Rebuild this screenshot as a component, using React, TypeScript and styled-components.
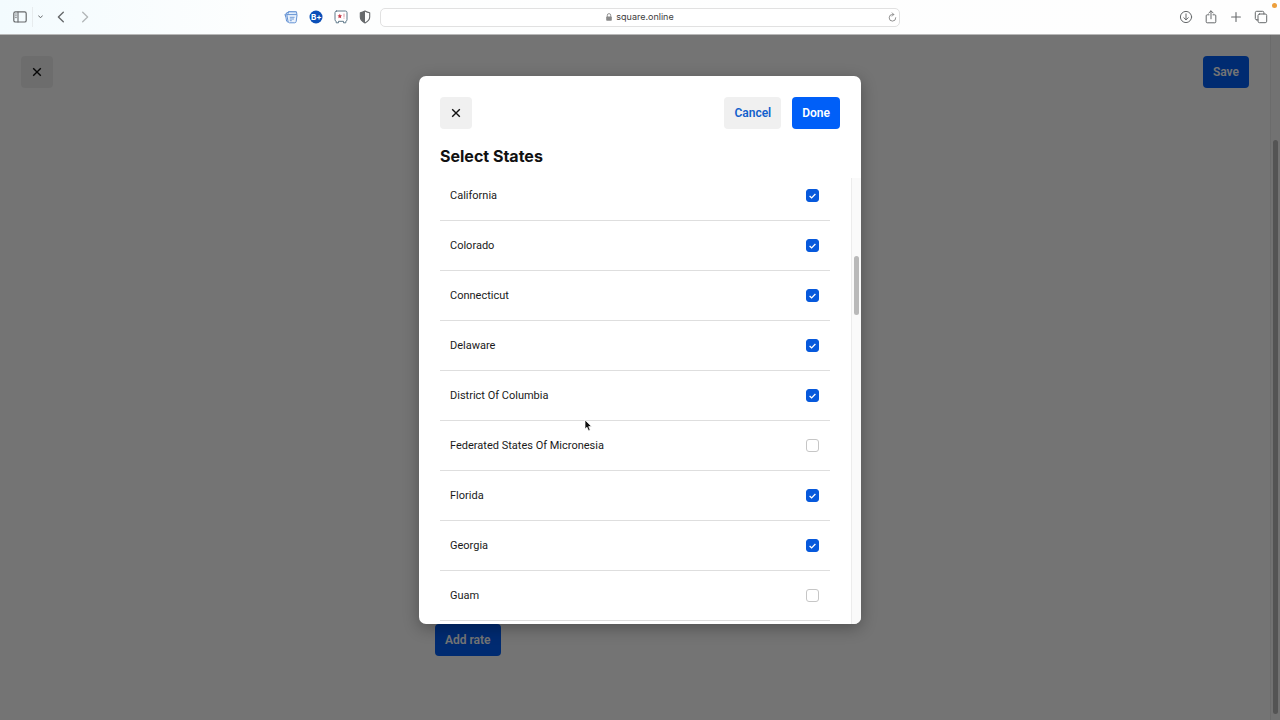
import React, { useState } from "react";
import styled, { createGlobalStyle } from "styled-components";

const GlobalStyle = createGlobalStyle`
  * { box-sizing: border-box; }
  body { margin: 0; font-family: Roboto, "Liberation Sans", sans-serif; color: #1a1a1a; }
  button, input { font: inherit; margin: 0; }
`;

const Shell = styled.div`
  display: flex;
  flex-direction: column;
  height: 100vh;
  overflow: hidden;
`;

const Toolbar = styled.header`
  position: relative;
  display: grid;
  grid-template-columns: 1fr minmax(200px, 520px) 1fr;
  align-items: center;
  flex: none;
  height: 35px;
  background: linear-gradient(90deg, #f3fbfe, #fdfefe 20%, #fefefe);
  border-bottom: 1px solid #b8b8b8;
`;

const ToolGroup = styled.div<{ $end?: boolean }>`
  display: flex;
  align-items: center;
  justify-content: ${(p) => (p.$end ? "flex-end" : "flex-start")};
  gap: ${(p) => (p.$end ? "11px" : "9px")};
  padding: ${(p) => (p.$end ? "0 12px 0 0" : "0 9px 0 13px")};
`;

const Extensions = styled.div`
  display: flex;
  gap: 11px;
  margin-left: auto;
`;

const ToolButton = styled.button<{ $width?: number }>`
  display: grid;
  place-items: center;
  width: ${(p) => p.$width ?? 14}px;
  height: 16px;
  padding: 0;
  border: 0;
  background: none;
  color: #66696b;
`;

const Separator = styled.span`
  width: 1px;
  height: 20px;
  margin: 0 -4px;
  background: #e7ecee;
`;

const AddressBar = styled.div`
  display: grid;
  grid-template-columns: 14px 1fr 14px;
  align-items: center;
  height: 19px;
  border: 1px solid #e1e1e1;
  border-radius: 5px;
  background: #fff;
`;

const Address = styled.span`
  display: flex;
  align-items: center;
  justify-content: center;
  gap: 4px;
  color: #3c3c3c;
  font: 9px/12px Inter, sans-serif;
`;

const RecordingDot = styled.span`
  position: absolute;
  top: 3px;
  right: 3px;
  width: 5px;
  height: 5px;
  border-radius: 50%;
  background: #ed9f3c;
`;

const Page = styled.main`
  position: relative;
  display: flex;
  flex: 1;
  min-height: 0;
  background: #fff;
`;

const PageContent = styled.div`
  display: flex;
  flex: 1;
  flex-direction: column;
  justify-content: space-between;
  padding: 21px 21px 64px;
`;

const ButtonBar = styled.div`
  display: flex;
  align-items: center;
  gap: 11px;
`;

const RateForm = styled.div`
  width: 400px;
  max-width: 100%;
  margin: 0 auto;
`;

const Button = styled.button<{ $kind?: "primary" | "plain"; $push?: boolean }>`
  height: 32px;
  padding: 0 10px;
  border: 0;
  border-radius: 4px;
  margin-left: ${(p) => (p.$push ? "auto" : "0")};
  background: ${(p) => (p.$kind === "plain" ? "#f0f0f0" : "#005ff8")};
  color: ${(p) => (p.$kind === "plain" ? "#1260cc" : "#fff")};
  font: 600 12px/16px Roboto, sans-serif;
  white-space: nowrap;
`;

const CloseButton = styled.button`
  display: grid;
  place-items: center;
  width: 32px;
  height: 32px;
  padding: 0;
  border: 0;
  border-radius: 4px;
  background: #f0f0f0;
  color: #111;
`;

const ScrollTrack = styled.div`
  display: flex;
  flex: none;
  flex-direction: column;
  align-items: center;
  width: 10px;
  border-left: 1px solid #ececec;
  background: #fafafa;
`;

const ScrollThumb = styled.span<{ $start: string; $size: string }>`
  width: 5px;
  height: ${(p) => p.$size};
  margin-top: ${(p) => p.$start};
  border-radius: 3px;
  background: #b9b9b9;
`;

const PageScroll = styled(ScrollTrack)`
  padding-top: 105px;
`;

const Backdrop = styled.div`
  position: absolute;
  inset: 0;
  display: flex;
  flex-direction: column;
  align-items: center;
  background: rgba(0, 0, 0, 0.545);
`;

const TopSpace = styled.div`
  flex: 0 0 6%;
`;

const Dialog = styled.section`
  display: flex;
  flex-direction: column;
  width: 442px;
  max-width: 100%;
  height: 80%;
  overflow: hidden;
  border-radius: 7px;
  background: #fff;
  box-shadow: 0 4px 16px rgba(0, 0, 0, 0.3);
`;

const DialogHeader = styled.div`
  padding: 21px 21px 11px;
`;

const Title = styled.h1`
  margin: 16px 0 0;
  font: 700 16px/22px Inter, sans-serif;
  color: #111;
`;

const ScrollArea = styled.div`
  display: flex;
  flex: 1;
  min-height: 0;
`;

const ListViewport = styled.div`
  flex: 1;
  padding: 0 21px;
  overflow: hidden;
`;

const StateList = styled.ul`
  margin: -7px 0 0;
  padding: 0;
  list-style: none;
`;

const StateRow = styled.label`
  display: flex;
  align-items: center;
  justify-content: space-between;
  height: 50px;
  padding: 0 11px 0 10px;
  border-bottom: 1px solid #dedede;
  font-size: 11px;
  line-height: 16px;
`;

const CheckSlot = styled.span`
  display: grid;
  place-items: center;
  > * { grid-area: 1 / 1; }
  svg { pointer-events: none; }
`;

const Checkbox = styled.input`
  appearance: none;
  width: 13px;
  height: 13px;
  border: 1px solid #c6c6c6;
  border-radius: 3px;
  background: #fff;
  &:checked { border-color: #0759dc; background: #0759dc; }
`;

const Cross = () => (
  <svg width="10" height="10" viewBox="0 0 10 10" fill="none" stroke="currentColor" strokeWidth="1.4" aria-hidden="true">
    <path d="M1.2 1.2l7.6 7.6M8.8 1.2L1.2 8.8" />
  </svg>
);

const iconProps = { fill: "none", stroke: "currentColor", strokeLinecap: "round", strokeLinejoin: "round", "aria-hidden": true } as const;

const initialStates = [
  { name: "California", checked: true },
  { name: "Colorado", checked: true },
  { name: "Connecticut", checked: true },
  { name: "Delaware", checked: true },
  { name: "District Of Columbia", checked: true },
  { name: "Federated States Of Micronesia", checked: false },
  { name: "Florida", checked: true },
  { name: "Georgia", checked: true },
  { name: "Guam", checked: false },
];

const Pointer = styled.svg`
  position: absolute;
  left: calc(50% - 56px);
  top: 384px;
  pointer-events: none;
`;

function BrowserToolbar() {
  return (
    <Toolbar>
      <ToolGroup>
        <ToolButton aria-label="Sidebar">
          <svg width="14" height="12" viewBox="0 0 14 12" {...iconProps}>
            <rect x="0.8" y="0.8" width="12.4" height="10.2" rx="1.6" strokeWidth="1.2" />
            <path d="M5 1v10" strokeWidth="1.1" />
            <path d="M2.3 3h1.2M2.3 4.8h1.2M2.3 6.6h1.2" strokeWidth="0.7" />
          </svg>
        </ToolButton>
        <Separator />
        <ToolButton $width={5} aria-label="Tab groups">
          <svg width="5" height="4" viewBox="0 0 5 4" {...iconProps}>
            <path d="M0.6 0.8L2.5 2.8 4.4 0.8" strokeWidth="1" />
          </svg>
        </ToolButton>
        <ToolButton aria-label="Back" $width={18}>
          <svg width="8" height="12" viewBox="0 0 8 12" {...iconProps}>
            <path d="M6.3 1.3L1.4 6l4.9 4.7" strokeWidth="1.4" />
          </svg>
        </ToolButton>
        <ToolButton aria-label="Forward" disabled $width={12}>
          <svg width="8" height="12" viewBox="0 0 8 12" {...iconProps} stroke="#b3b7b9">
            <path d="M1.7 1.3L6.6 6l-4.9 4.7" strokeWidth="1.4" />
          </svg>
        </ToolButton>
        <Extensions>
          <ToolButton aria-label="Saved pages">
            <svg width="14" height="14" viewBox="0 0 14 14" {...iconProps} stroke="#6593d4">
              <path d="M1.6 6.4L.9 4.4l1.6-.6M3 4.6L2.6 2.8l1.6-.4M4.4 3.2V1.6l8 .1.4 2" fill="#c5dbf6" />
              <path d="M1.6 5.4l1 5.8 1.3.9" />
              <path d="M3.2 4.6h9.9l-.9 6.8q-.2 1.4-1.5 1.4H5.4q-1.2 0-1.4-1.4z" fill="#eaf2fc" />
              <path d="M6.2 7.3h4M6.2 9h3.4M6.2 10.7h1.2" strokeWidth="0.9" />
            </svg>
          </ToolButton>
          <ToolButton aria-label="B plus">
            <svg width="14" height="14" viewBox="0 0 14 14" aria-hidden="true">
              <circle cx="7" cy="7" r="6.5" fill="#0b4fb8" />
              <text x="2" y="10" fill="#fff" fontFamily="Inter, sans-serif" fontSize="8" fontWeight="700">B+</text>
            </svg>
          </ToolButton>
          <ToolButton aria-label="Favorites">
            <svg width="14" height="14" viewBox="0 0 14 14" {...iconProps} stroke="#5e7889">
              <path d="M2.6 1h8.8q1.6 0 1.6 1.6v7.1q0 1.4-1.2 1.6v1.5H9.5v-1.5h-5v1.5H2.2v-1.5Q1 11.1 1 9.7V2.6Q1 1 2.6 1z" fill="#fff" />
              <path d="M5.8 3.8l.7 1.5 1.6.2-1.2 1.1.3 1.6-1.4-.8-1.4.8.3-1.6-1.2-1.1 1.6-.2z" fill="#c83b4a" stroke="none" />
              <path d="M10 4v2.5M10 8v.2" stroke="#cf7a85" strokeWidth="0.8" />
            </svg>
          </ToolButton>
          <ToolButton aria-label="Privacy report" $width={12}>
            <svg width="12" height="14" viewBox="0 0 12 14" {...iconProps}>
              <path d="M6 1Q8.3 2.4 10.7 2.7V7q0 3.6-4.7 6Q1.3 10.6 1.3 7V2.7Q3.7 2.4 6 1z" strokeWidth="1.1" />
              <path d="M6 1v12Q1.3 10.6 1.3 7V2.7Q3.7 2.4 6 1z" fill="currentColor" stroke="none" />
            </svg>
          </ToolButton>
        </Extensions>
      </ToolGroup>
      <AddressBar>
        <span />
        <Address>
          <svg width="6" height="8" viewBox="0 0 6 8" aria-hidden="true">
            <path d="M1.3 4V2.3a1.7 1.7 0 013.4 0V4" fill="none" stroke="#8a8a8a" strokeWidth="0.9" />
            <rect x="0.2" y="3.5" width="5.6" height="4.2" rx="0.8" fill="#8a8a8a" />
          </svg>
          square.online
        </Address>
        <ToolButton aria-label="Reload">
          <svg width="9" height="10" viewBox="0 0 9 10" {...iconProps} stroke="#858585">
            <path d="M7.8 5.7A3.3 3.3 0 114.5 2.5h1" strokeWidth="0.9" />
            <path d="M4.2.9l1.6 1.6-1.6 1.6" strokeWidth="0.9" />
          </svg>
        </ToolButton>
      </AddressBar>
      <ToolGroup $end>
        <ToolButton aria-label="Downloads">
          <svg width="14" height="14" viewBox="0 0 14 14" {...iconProps}>
            <circle cx="7" cy="7" r="5.6" />
            <path d="M7 3.9v5.8M4.8 7.7L7 9.9l2.2-2.2" />
          </svg>
        </ToolButton>
        <ToolButton aria-label="Share">
          <svg width="14" height="16" viewBox="0 0 14 16" {...iconProps}>
            <path d="M5 5.8H3.2q-1 0-1 1v6q0 1 1 1h7.6q1 0 1-1v-6q0-1-1-1H9M7 9.8V2M4.8 4L7 1.8 9.2 4" />
          </svg>
        </ToolButton>
        <ToolButton aria-label="New tab">
          <svg width="12" height="12" viewBox="0 0 12 12" {...iconProps}>
            <path d="M6 1.6v8.8M1.6 6h8.8" strokeWidth="1.1" />
          </svg>
        </ToolButton>
        <ToolButton aria-label="Tab overview">
          <svg width="14" height="14" viewBox="0 0 14 14" {...iconProps}>
            <rect x="4" y="4" width="8.7" height="8.7" rx="1.5" />
            <path d="M2.7 9.9q-1.4 0-1.4-1.4V2.7q0-1.4 1.4-1.4h5.8q1.4 0 1.4 1.4V4M2.7 9.9H4" />
          </svg>
        </ToolButton>
      </ToolGroup>
      <RecordingDot />
    </Toolbar>
  );
}

export default function App() {
  const [states, setStates] = useState(initialStates);
  const toggle = (name: string) =>
    setStates((all) => all.map((s) => (s.name === name ? { ...s, checked: !s.checked } : s)));

  return (
    <Shell>
      <GlobalStyle />
      <BrowserToolbar />
      <Page>
        <PageContent>
          <ButtonBar>
            <CloseButton aria-label="Close page"><Cross /></CloseButton>
            <Button $push>Save</Button>
          </ButtonBar>
          <RateForm>
            <Button>Add rate</Button>
          </RateForm>
        </PageContent>
        <PageScroll>
          <ScrollThumb $start="0" $size="99%" />
        </PageScroll>
        <Backdrop>
          <TopSpace />
          <Dialog role="dialog" aria-modal="true" aria-labelledby="dialog-title">
            <DialogHeader>
              <ButtonBar>
                <CloseButton aria-label="Close dialog"><Cross /></CloseButton>
                <Button $kind="plain" $push>Cancel</Button>
                <Button>Done</Button>
              </ButtonBar>
              <Title id="dialog-title">Select States</Title>
            </DialogHeader>
            <ScrollArea>
              <ListViewport>
                <StateList>
                  {states.map((s) => (
                    <li key={s.name}>
                      <StateRow>
                        {s.name}
                        <CheckSlot>
                          <Checkbox type="checkbox" checked={s.checked} onChange={() => toggle(s.name)} />
                          {s.checked && (
                            <svg width="7" height="6" viewBox="0 0 7 6" fill="none" stroke="#fff" strokeWidth="1.3" aria-hidden="true">
                              <path d="M0.6 3l2 1.9L6.4 1" />
                            </svg>
                          )}
                        </CheckSlot>
                      </StateRow>
                    </li>
                  ))}
                </StateList>
              </ListViewport>
              <ScrollTrack>
                <ScrollThumb $start="78px" $size="59px" />
              </ScrollTrack>
            </ScrollArea>
          </Dialog>
          <Pointer width="9" height="13" viewBox="0 0 9 13" aria-hidden="true">
            <path d="M1 1v9l2-1.8 1.5 3.5 1.7-.7-1.5-3.4h2.9z" fill="#111" stroke="#fff" strokeWidth="0.7" />
          </Pointer>
        </Backdrop>
      </Page>
    </Shell>
  );
}
